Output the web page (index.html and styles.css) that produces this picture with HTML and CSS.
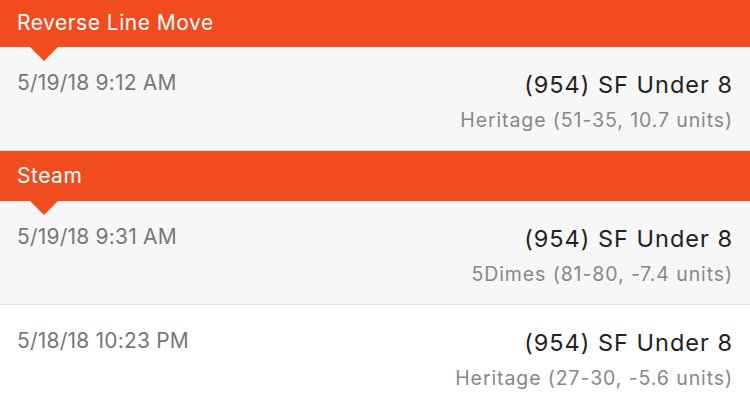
FILE: index.html
```html
<!DOCTYPE html>
<html lang="en">
<head>
    <meta charset="UTF-8">
    <meta name="viewport" content="width=device-width, initial-scale=1.0">
    <title>Alerts</title>
    <link rel="stylesheet" href="styles.css">
</head>
<body>
    <div class="feed">
        <div class="alert-header">Reverse Line Move</div>
        <div class="alert-row shaded">
            <div class="alert-time">5/19/18 9:12 AM</div>
            <div class="alert-info">
                <div class="alert-pick">(954) SF Under 8</div>
                <div class="alert-source">Heritage (51-35, 10.7 units)</div>
            </div>
        </div>

        <div class="alert-header">Steam</div>
        <div class="alert-row shaded">
            <div class="alert-time">5/19/18 9:31 AM</div>
            <div class="alert-info">
                <div class="alert-pick">(954) SF Under 8</div>
                <div class="alert-source">5Dimes (81-80, -7.4 units)</div>
            </div>
        </div>
        <div class="alert-row">
            <div class="alert-time">5/18/18 10:23 PM</div>
            <div class="alert-info">
                <div class="alert-pick">(954) SF Under 8</div>
                <div class="alert-source">Heritage (27-30, -5.6 units)</div>
            </div>
        </div>
    </div>
</body>
</html>
```

FILE: styles.css
```css
* { margin: 0; padding: 0; box-sizing: border-box; }
body {
    font-family: Inter, "Noto Sans", sans-serif;
    background: #ffffff;
    color: #222222;
    overflow: hidden;
}
.feed {
    display: flex;
    flex-direction: column;
}
.alert-header {
    position: relative;
    background: #f04c1f;
    color: #ffffff;
    font-size: 21px;
    letter-spacing: 0.5px;
    height: 50px;
    line-height: 50px;
    padding: 0 17px;
}
.alert-header:first-child {
    height: 47px;
    line-height: 45px;
}
.alert-header::after {
    content: "";
    position: absolute;
    left: 30px;
    bottom: -14px;
    border-left: 14px solid transparent;
    border-right: 14px solid transparent;
    border-top: 14px solid #f04c1f;
}
.alert-row {
    display: flex;
    justify-content: space-between;
    align-items: flex-start;
    height: 104px;
    padding: 22px 17px 0;
    border-bottom: 1px solid #dddddd;
}
.alert-row.shaded {
    background: #f7f7f7;
}
.alert-time {
    color: #777777;
    font-size: 21px;
    letter-spacing: 0.2px;
    line-height: 28px;
}
.alert-info {
    text-align: right;
    padding-top: 2px;
}
.alert-pick {
    color: #222222;
    font-size: 23.5px;
    letter-spacing: 1px;
    line-height: 28px;
}
.alert-source {
    color: #888888;
    font-size: 19.5px;
    letter-spacing: 0.9px;
    line-height: 28px;
    margin-top: 7px;
}
```
